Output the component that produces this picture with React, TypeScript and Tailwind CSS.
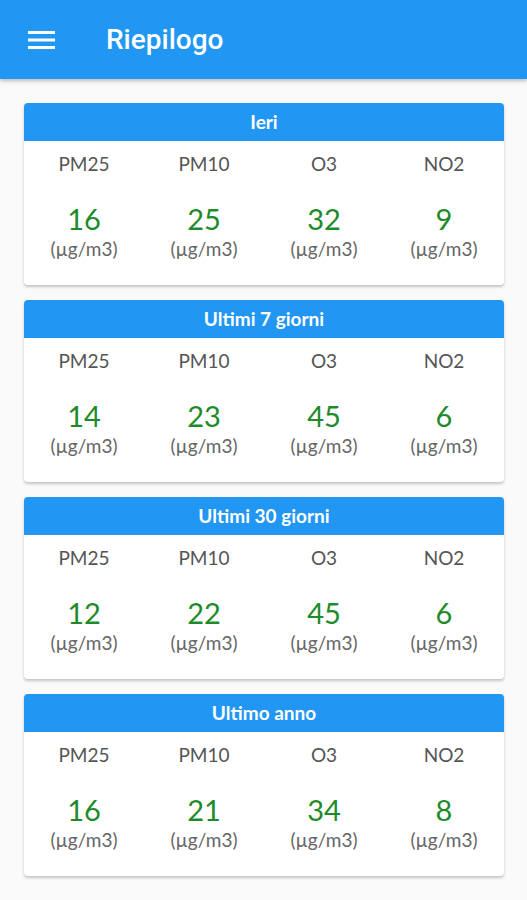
const periods = [
  { title: "Ieri", values: [16, 25, 32, 9] },
  { title: "Ultimi 7 giorni", values: [14, 23, 45, 6] },
  { title: "Ultimi 30 giorni", values: [12, 22, 45, 6] },
  { title: "Ultimo anno", values: [16, 21, 34, 8] },
];

const labels = ["PM25", "PM10", "O3", "NO2"];

function SummaryCard({ title, values }: { title: string; values: number[] }) {
  return (
    <div className="bg-white rounded-[4px] overflow-hidden shadow-[0_2px_3px_rgba(0,0,0,0.22)]">
      <div className="h-[38px] bg-[#2196f3] flex items-center justify-center text-white font-bold text-[19px]">
        {title}
      </div>
      <div className="grid grid-cols-4 pt-[11px] pb-[25px] text-center">
        {labels.map((label, i) => (
          <div key={label} className="flex flex-col items-center">
            <div className="text-[19px] leading-6 text-[#555]">{label}</div>
            <div className="mt-[27px] text-[29px] leading-[32px] text-[#1e8b2a]">{values[i]}</div>
            <div className="mt-[3px] text-[19px] leading-[22px] text-[#666]">(µg/m3)</div>
          </div>
        ))}
      </div>
    </div>
  );
}

export default function App() {
  return (
    <div className="min-h-[900px] bg-[#fafafa] font-['Lato',sans-serif]">
      {/* APP BAR */}
      <header className="h-[79px] bg-[#2196f3] flex items-center shadow-[0_2px_4px_rgba(0,0,0,0.25)] relative">
        <div className="w-[106px] pl-[28px]">
          <svg width="27" height="20" viewBox="0 0 27 20">
            <rect x="0" y="1" width="27" height="3" fill="white" />
            <rect x="0" y="8.5" width="27" height="3" fill="white" />
            <rect x="0" y="16" width="27" height="3" fill="white" />
          </svg>
        </div>
        <h1 className="font-['Roboto',sans-serif] font-medium text-white text-[28px]">Riepilogo</h1>
      </header>

      {/* CARDS */}
      <main className="pl-[24px] pr-[23px] pt-[24px] pb-6 flex flex-col gap-[15px]">
        {periods.map((p) => (
          <SummaryCard key={p.title} title={p.title} values={p.values} />
        ))}
      </main>
    </div>
  );
}
